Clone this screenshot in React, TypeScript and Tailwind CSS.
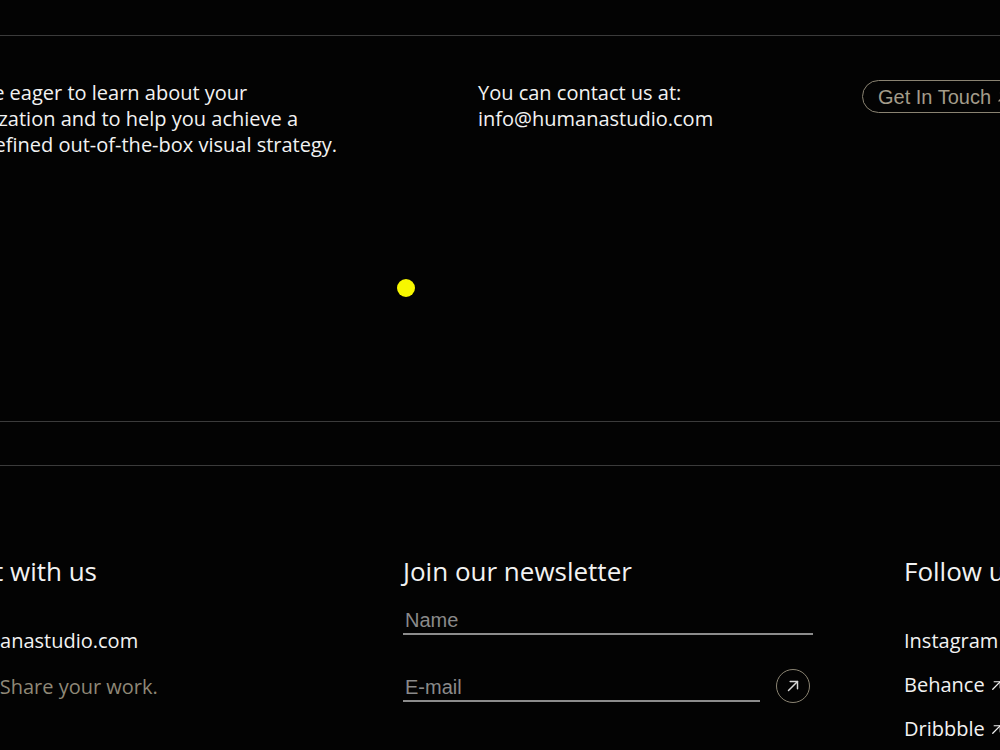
import React from "react";

const body = { fontFamily: '"Open Sans", "Noto Sans", sans-serif' };
const arial = { fontFamily: '"Liberation Sans", Arial, sans-serif' };

function ArrowUpRight({ className = "" }: { className?: string }) {
  return (
    <svg viewBox="0 0 16 16" className={className} fill="none" stroke="currentColor" strokeWidth="1.3" strokeLinecap="round" strokeLinejoin="round">
      <path d="M4 12 L12 4" />
      <path d="M5.5 4 H12 V10.5" />
    </svg>
  );
}

export default function App() {
  return (
    <div className="relative w-[1000px] h-[750px] overflow-hidden bg-[#030303] text-[#f2f2f2]" style={body}>
      <div className="w-[1200px] -ml-[100px]">
        {/* contact intro */}
        <div className="h-[35px]" />
        <section className="border-t border-[#3b3b3b] h-[386px] pt-[44px] flex">
          <p className="w-[578px] pl-[39px] text-[20px] leading-[26px]">
            We are eager to learn about your
            <br />
            organization and to help you achieve a
            <br />
            well-defined out-of-the-box visual strategy.
          </p>
          <p className="w-[384px] text-[20px] leading-[26px]">
            You can contact us at:
            <br />
            info@humanastudio.com
          </p>
          <div>
            <a
              className="inline-flex items-center gap-[4px] h-[33px] px-[15px] rounded-full border border-[#8a8372] text-[#a39c8a] text-[20px] whitespace-nowrap"
              style={arial}
            >
              Get In Touch <ArrowUpRight className="w-[16px] h-[16px]" />
            </a>
          </div>
        </section>

        <div className="border-t border-[#3b3b3b] h-[44px]" />

        {/* footer */}
        <footer className="border-t border-[#3b3b3b] pt-[88px] grid grid-cols-[500px_501px_199px] pl-[3px]">
          <div>
            <h3 className="text-[26px] leading-[34px] whitespace-nowrap">Connect with us</h3>
            <div className="mt-[40px] text-[20px] leading-[26px]">info@humanastudio.com</div>
            <div className="mt-[20px] text-[20px] leading-[26px] text-[#8f8877] whitespace-nowrap">Designer? Share your work.</div>
          </div>
          <div>
            <h3 className="text-[26px] leading-[34px] whitespace-nowrap">Join our newsletter</h3>
            <div className="mt-[14px] w-[410px] border-b-2 border-[#8c8c8c] pl-[2px] h-[33px] flex items-end">
              <span className="text-[20px] leading-[26px] text-[#8a8a8a]" style={arial}>Name</span>
            </div>
            <div className="mt-[34px] flex items-end gap-[16px]">
              <div className="w-[357px] border-b-2 border-[#8c8c8c] pl-[2px]">
                <span className="text-[20px] leading-[26px] text-[#8a8a8a]" style={arial}>E-mail</span>
              </div>
              <button className="mb-[-1px] w-[34px] h-[34px] rounded-full border border-[#8a8372] flex items-center justify-center text-[#d8d8d8]">
                <ArrowUpRight className="w-[18px] h-[18px]" />
              </button>
            </div>
          </div>
          <div>
            <h3 className="text-[26px] leading-[34px] whitespace-nowrap">Follow us</h3>
            <ul className="mt-[40px] flex flex-col gap-[18px] text-[20px] leading-[26px] whitespace-nowrap">
              <li className="flex items-center gap-[4px]">Instagram <ArrowUpRight className="w-[15px] h-[15px]" /></li>
              <li className="flex items-center gap-[4px]">Behance <ArrowUpRight className="w-[15px] h-[15px]" /></li>
              <li className="flex items-center gap-[4px]">Dribbble <ArrowUpRight className="w-[15px] h-[15px]" /></li>
            </ul>
          </div>
        </footer>
      </div>

      {/* cursor follower */}
      <div className="absolute left-[397px] top-[279px] w-[18px] h-[18px] rounded-full bg-[#f7f700]" />
    </div>
  );
}
